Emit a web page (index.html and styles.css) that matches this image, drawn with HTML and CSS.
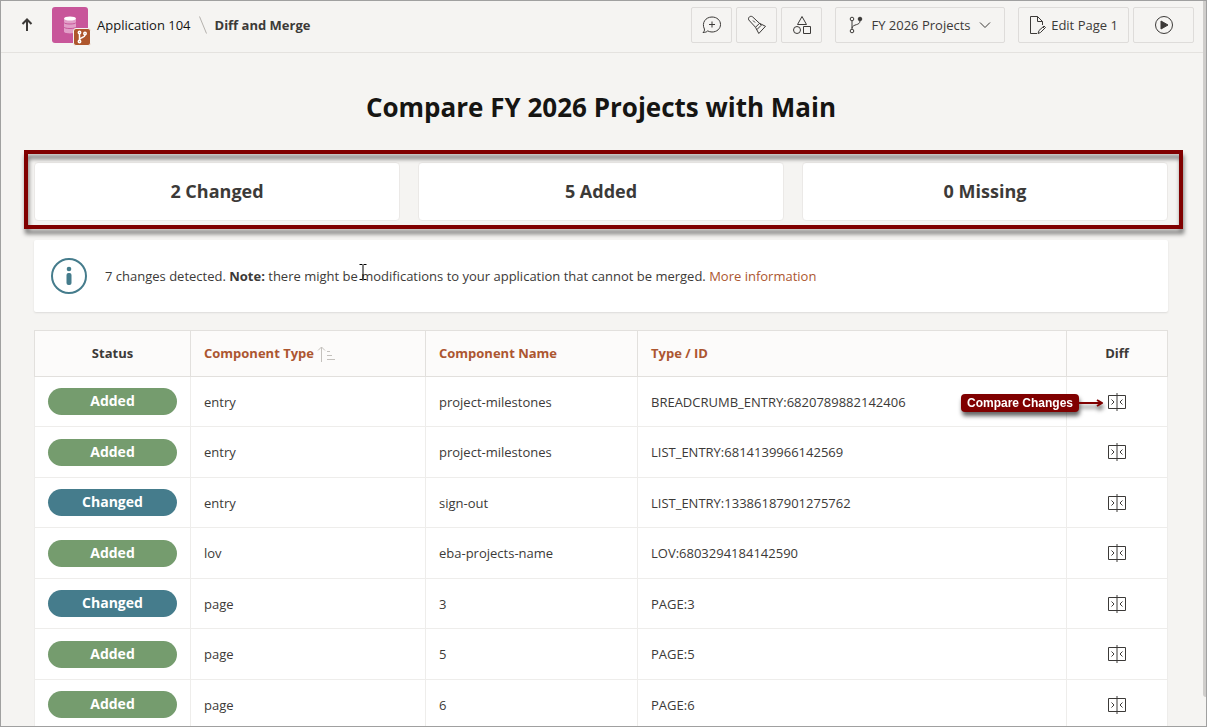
FILE: index.html
```html
<!DOCTYPE html>
<html lang="en">
<head>
    <meta charset="UTF-8">
    <title>Diff and Merge</title>
    <link rel="stylesheet" href="styles.css">
</head>
<body>

    <svg class="sprite" aria-hidden="true">
        <symbol id="icon-diff" viewBox="0 0 18 18">
            <path d="M.5 2.500h17v13H.5zM9 0v18M3.500 6.500l2.500 2.500-2.500 2.500M14.500 6.500L12 9l2.500 2.500" />
        </symbol>
    </svg>

    <header class="topbar">
        <a href="#" class="up-link" aria-label="Up">
            <svg class="icon" width="14" height="14" viewBox="0 0 14 14" stroke-width="2"><path d="M7 13V2M2.500 6L7 1.500 11.500 6" /></svg>
        </a>
        <div class="app-icon">
            <svg width="36" height="36" viewBox="0 0 36 36">
                <path d="M12 12v12.500c0 2.500 12 2.500 12 0V12z" fill="#e29fc8" />
                <path d="M12 15.500c0 2 12 2 12 0M12 20c0 2 12 2 12 0" fill="none" stroke="#c8569a" />
                <ellipse cx="18" cy="11.500" rx="6" ry="2" fill="#fff" />
            </svg>
            <span class="app-badge">
                <svg width="14" height="14" viewBox="0 0 14 14" fill="none" stroke="#fff" stroke-width="1.500">
                    <circle cx="4.500" cy="2.500" r="1.200" /><circle cx="4.500" cy="11.500" r="1.200" /><circle cx="10" cy="3.500" r="1.200" />
                    <path d="M4.500 4v6M10 5c0 3-5.500 2-5.500 5" />
                </svg>
            </span>
        </div>
        <nav class="breadcrumb">
            <a href="#">Application 104</a>
            <svg class="slash" width="8" height="18" viewBox="0 0 8 18"><path d="M.5.5l7 17" /></svg>
            <strong>Diff and Merge</strong>
        </nav>

        <div class="toolbar">
            <button class="btn btn-icon" aria-label="Comments">
                <svg class="icon" width="20" height="20" viewBox="0 0 20 20"><path d="M1 17.500c1.200-1 1.700-2 1.400-3.500C-.6 8 3.500 2 10 2c4.800 0 8.500 3.200 8.500 7.500S14.800 17 10 17c-1.600 0-3-.4-4.300-1.100C4.700 17 3 17.500 1 17.500zM10 6.500v6M7 9.500h6" /></svg>
            </button>
            <button class="btn btn-icon" aria-label="Search">
                <svg class="icon" width="20" height="20" viewBox="0 0 20 20"><path d="M1.800 5c-1.200-2.500 1.500-4.700 3.700-3.200l7 6.500-4 4zM12.500 8.300l6 3-6.700 7.200-3.300-6.200M12.500 8.300l1.700 2-4.400 4.400M6 5.500l2 2" /></svg>
            </button>
            <button class="btn btn-icon" aria-label="Shared components">
                <svg class="icon" width="20" height="20" viewBox="0 0 20 20"><path d="M10 1.500L14.500 9.500h-9zM11.500 11.500h7v7h-7z" /><circle cx="5" cy="15" r="3.500" /></svg>
            </button>
            <button class="btn btn-branch">
                <svg class="icon" width="14" height="18" viewBox="0 0 14 18"><circle cx="3" cy="3" r="1.800" /><circle cx="3" cy="15" r="1.800" /><circle cx="11" cy="3" r="1.800" fill="currentColor" /><path d="M3 4.800v8.400M11 4.800C11 10 4 7.500 3 12" /></svg>
                FY 2026 Projects
                <svg class="icon" width="12" height="8" viewBox="0 0 12 8"><path d="M1 1.500l5 5 5-5" /></svg>
            </button>
            <button class="btn btn-edit">
                <svg class="icon" width="18" height="20" viewBox="0 0 18 20"><path d="M8 18.500H1.500v-17h7l5 5V10M8.500 1.500v5h5M9 18.500l1-3 5-4.500 1.500 1.500-5 5zM14 12l1.500 1.500" /></svg>
                Edit Page 1
            </button>
            <button class="btn btn-run" aria-label="Run page">
                <svg class="icon" width="20" height="20" viewBox="0 0 20 20"><circle cx="10" cy="10" r="8.500" /><path d="M7 6l7 4-7 4z" fill="currentColor" /></svg>
            </button>
        </div>
    </header>

    <main class="content">
        <h1>Compare FY 2026 Projects with Main</h1>

        <div class="summary">
            <div class="card">2 Changed</div>
            <div class="card">5 Added</div>
            <div class="card">0 Missing</div>
        </div>

        <div class="notice">
            <svg width="38" height="38" viewBox="0 0 38 38">
                <circle cx="19" cy="19" r="17" fill="none" stroke="#457c8c" stroke-width="2" />
                <circle cx="19" cy="12" r="2.300" fill="#457c8c" />
                <rect x="16.500" y="16" width="5" height="12" rx="2" fill="#457c8c" />
            </svg>
            <p>7 changes detected. <strong>Note:</strong> there might be modifications to your application that cannot be merged. <a href="#">More information</a></p>
            <svg class="cursor" width="8" height="16" viewBox="0 0 8 16"><path d="M.5.5h3M4.500.5h3M4 1v14M.5 15.500h3M4.500 15.500h3" /></svg>
        </div>

        <table class="report">
            <colgroup>
                <col class="col-status">
                <col class="col-type">
                <col class="col-name">
                <col>
                <col class="col-diff">
            </colgroup>
            <thead>
                <tr>
                    <th class="center">Status</th>
                    <th><a href="#">Component Type <svg class="sort" width="18" height="16" viewBox="0 0 18 16"><path d="M4.500 16V1M1 4.500L4.500 1 8 4.500M10 5.500h3M10 9.500h5M10 13.500h8" /></svg></a></th>
                    <th><a href="#">Component Name</a></th>
                    <th><a href="#">Type / ID</a></th>
                    <th class="center">Diff</th>
                </tr>
            </thead>
            <tbody>
                <tr>
                    <td><span class="status added">Added</span></td>
                    <td>entry</td>
                    <td>project-milestones</td>
                    <td>BREADCRUMB_ENTRY:6820789882142406</td>
                    <td class="diff">
                        <a href="#" aria-label="Compare"><svg width="18" height="18"><use href="#icon-diff" /></svg></a>
                        <div class="callout">
                            <span>Compare Changes</span>
                            <svg width="24" height="8" viewBox="0 0 24 8"><path d="M0 4h23M18 1l5 3-5 3" /></svg>
                        </div>
                    </td>
                </tr>
                <tr>
                    <td><span class="status added">Added</span></td>
                    <td>entry</td>
                    <td>project-milestones</td>
                    <td>LIST_ENTRY:6814139966142569</td>
                    <td class="diff"><a href="#" aria-label="Compare"><svg width="18" height="18"><use href="#icon-diff" /></svg></a></td>
                </tr>
                <tr>
                    <td><span class="status changed">Changed</span></td>
                    <td>entry</td>
                    <td>sign-out</td>
                    <td>LIST_ENTRY:13386187901275762</td>
                    <td class="diff"><a href="#" aria-label="Compare"><svg width="18" height="18"><use href="#icon-diff" /></svg></a></td>
                </tr>
                <tr>
                    <td><span class="status added">Added</span></td>
                    <td>lov</td>
                    <td>eba-projects-name</td>
                    <td>LOV:6803294184142590</td>
                    <td class="diff"><a href="#" aria-label="Compare"><svg width="18" height="18"><use href="#icon-diff" /></svg></a></td>
                </tr>
                <tr>
                    <td><span class="status changed">Changed</span></td>
                    <td>page</td>
                    <td>3</td>
                    <td>PAGE:3</td>
                    <td class="diff"><a href="#" aria-label="Compare"><svg width="18" height="18"><use href="#icon-diff" /></svg></a></td>
                </tr>
                <tr>
                    <td><span class="status added">Added</span></td>
                    <td>page</td>
                    <td>5</td>
                    <td>PAGE:5</td>
                    <td class="diff"><a href="#" aria-label="Compare"><svg width="18" height="18"><use href="#icon-diff" /></svg></a></td>
                </tr>
                <tr>
                    <td><span class="status added">Added</span></td>
                    <td>page</td>
                    <td>6</td>
                    <td>PAGE:6</td>
                    <td class="diff"><a href="#" aria-label="Compare"><svg width="18" height="18"><use href="#icon-diff" /></svg></a></td>
                </tr>
            </tbody>
        </table>
    </main>

    <div class="scroll-thumb"></div>

</body>
</html>
```
FILE: styles.css
```css
* {
    box-sizing: border-box;
}

body {
    margin: 0;
    height: 100vh;
    overflow: hidden;
    position: relative;
    display: flex;
    flex-direction: column;
    border: 1px solid #a0a0a0;
    background: #f5f4f2;
    color: #3c3a38;
    font-family: "Open Sans", "Noto Sans", sans-serif;
    font-size: 13px;
    line-height: 20px;
}

a {
    color: #ac5630;
    text-decoration: none;
}

.sprite {
    display: none;
}

.icon {
    fill: none;
    stroke: currentColor;
    flex: none;
}

/* header */
.topbar {
    display: flex;
    align-items: center;
    flex: none;
    height: 52px;
    padding: 0 12px 4px 19px;
    border-bottom: 1px solid #e4e2df;
}

.up-link {
    display: flex;
    color: #3c3a38;
    margin-right: 18px;
}

.app-icon {
    position: relative;
    width: 36px;
    height: 36px;
    margin-right: 9px;
    border-radius: 3px;
    background: #c8569a;
}

.app-badge {
    position: absolute;
    right: -3px;
    bottom: -3px;
    width: 18px;
    height: 18px;
    padding: 1px;
    border: 1px solid #f5f4f2;
    border-radius: 3px;
    background: #ae562c;
}

.app-badge svg {
    display: block;
}

.breadcrumb {
    display: flex;
    align-items: center;
    gap: 8px;
}

.breadcrumb a {
    color: #161513;
}

.slash {
    fill: none;
    stroke: #b4b1ad;
}

.toolbar {
    display: flex;
    gap: 4px;
    margin-left: auto;
}

.btn {
    display: flex;
    align-items: center;
    justify-content: center;
    height: 36px;
    padding: 0;
    border: 1px solid #dedcda;
    border-radius: 2px;
    background: #f5f4f2;
    color: #3c3a38;
    font: inherit;
    cursor: pointer;
}

.btn:hover {
    background: #fff;
}

.btn-icon {
    width: 41px;
}

.btn-branch {
    width: 170px;
    gap: 8px;
    margin: 0 9px;
}

.btn-edit {
    width: 111px;
    gap: 4px;
}

.btn-run {
    width: 61px;
}

/* page */
.content {
    flex: 1;
    min-height: 0;
    overflow: hidden;
    padding: 36px 38px 0 33px;
}

h1 {
    margin: 0 0 37px;
    color: #161513;
    font-size: 26px;
    line-height: 36px;
    text-align: center;
}

.summary {
    position: relative;
    display: grid;
    grid-template-columns: repeat(3, 1fr);
    gap: 18px;
}

/* highlight frame around the cards */
.summary::after {
    content: "";
    position: absolute;
    inset: -12px -15px -8px -10px;
    border: 4px solid #800000;
    filter: drop-shadow(1px 5px 2px rgba(0, 0, 0, 0.5));
    pointer-events: none;
}

.card {
    height: 59px;
    border: 1px solid #ebe9e7;
    border-radius: 4px;
    background: #fff;
    font-size: 18px;
    font-weight: bold;
    line-height: 56px;
    text-align: center;
}

.notice {
    position: relative;
    display: flex;
    align-items: center;
    gap: 17px;
    height: 72px;
    margin: 19px 0 18px;
    padding: 0 16px;
    border-radius: 2px;
    background: #fff;
    box-shadow: 0 1px 2px rgba(0, 0, 0, 0.1);
}

.notice p {
    margin: 0;
}

.cursor {
    position: absolute;
    left: 325px;
    top: 24px;
    fill: none;
    stroke: #000;
}

/* report */
.report {
    width: 100%;
    table-layout: fixed;
    border-collapse: collapse;
    border: 1px solid #e2e0dd;
    background: #fff;
}

.col-status {
    width: 156px;
}

.col-type {
    width: 235px;
}

.col-name {
    width: 212px;
}

.col-diff {
    width: 101px;
}

.report th {
    height: 46px;
    padding: 0 13px 2px;
    border: 1px solid #e2e0dd;
    background: #fcfbfa;
    text-align: left;
}

.report td {
    height: 50px;
    padding: 0 13px;
    border: 1px solid #eeedeb;
}

.report tr:nth-child(even) td {
    height: 51px;
}

.report th.center {
    text-align: center;
}

.sort {
    fill: none;
    stroke: #c4c1bd;
    vertical-align: middle;
}

.status {
    display: block;
    height: 27px;
    border-radius: 14px;
    color: #fff;
    font-size: 14px;
    font-weight: bold;
    line-height: 26px;
    text-align: center;
}

.added {
    background: #759c6e;
}

.changed {
    background: #457c8c;
}

.report .diff {
    position: relative;
    text-align: center;
}

.diff a svg {
    display: block;
    margin: 0 auto;
    fill: none;
    stroke: #3c3a38;
}

.callout {
    position: absolute;
    right: 64px;
    top: 17px;
    display: flex;
    align-items: center;
    filter: drop-shadow(1px 4px 2px rgba(0, 0, 0, 0.6));
}

.callout span {
    padding: 0 6px;
    border-radius: 4px;
    background: #800000;
    color: #fff;
    font: bold 12px/18px "Liberation Sans", Arial, sans-serif;
    white-space: nowrap;
}

.callout svg {
    fill: none;
    stroke: #800000;
    stroke-width: 2;
}

.scroll-thumb {
    position: absolute;
    top: 0;
    right: 0;
    width: 3px;
    height: 96%;
    border-radius: 0 0 0 3px;
    background: #cfcdcb;
}
```
